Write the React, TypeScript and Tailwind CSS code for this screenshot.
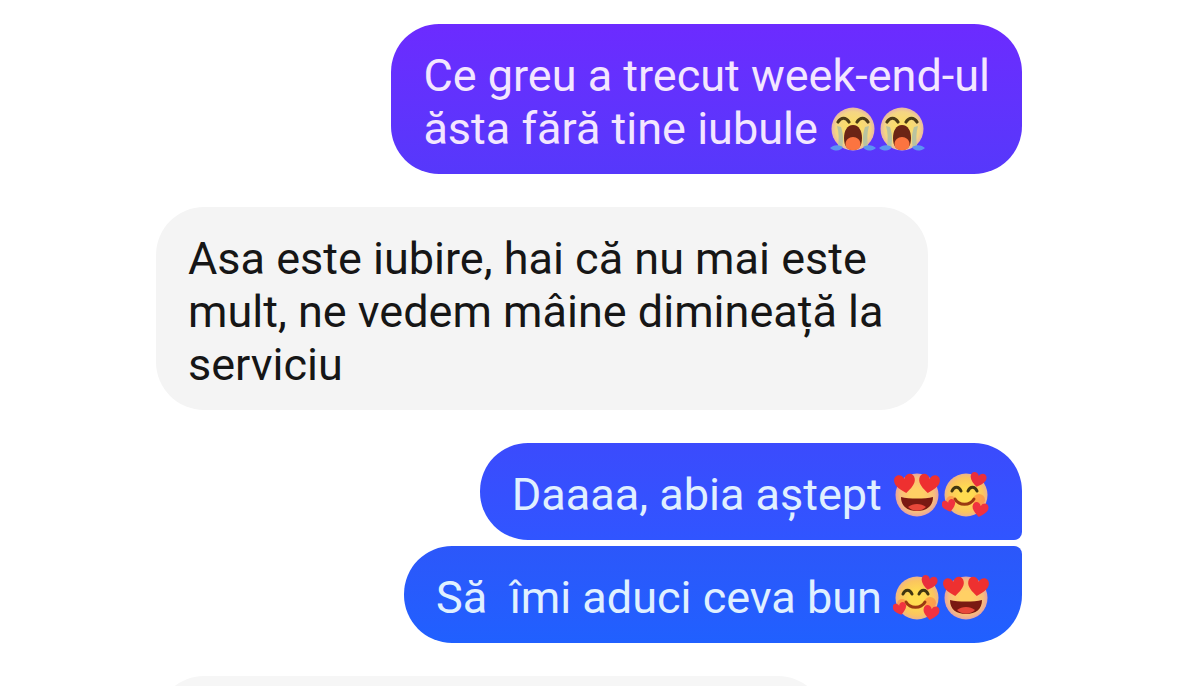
import { clsx } from "clsx";

type EmojiName = "cry" | "heartEyes" | "loved";

type Message = {
  text: string;
  emojis?: EmojiName[];
  className: string;
};

const groups: { mine: boolean; messages: Message[] }[] = [
  {
    mine: true,
    messages: [
      {
        text: "Ce greu a trecut week-end-ul\năsta fără tine iubule ",
        emojis: ["cry", "cry"],
        className: "rounded-[48px] bg-linear-to-b from-[#6c2bff] to-[#5638fb] text-[#f3e6ff]",
      },
    ],
  },
  {
    mine: false,
    messages: [
      {
        text: "Asa este iubire, hai că nu mai este mult, ne vedem mâine dimineață la serviciu",
        className: "rounded-[48px] bg-[#f4f4f4] text-[#161616]",
      },
    ],
  },
  {
    mine: true,
    messages: [
      {
        text: "Daaaa, abia aștept ",
        emojis: ["heartEyes", "loved"],
        className:
          "rounded-[48px] rounded-br-lg bg-linear-to-b from-[#3b4bfd] to-[#3055ff] text-[#e0f0ff]",
      },
      {
        text: "Să  îmi aduci ceva bun ",
        emojis: ["loved", "heartEyes"],
        className:
          "rounded-[48px] rounded-tr-lg bg-linear-to-b from-[#2c57fa] to-[#2060ff] text-[#e0f0ff]",
      },
    ],
  },
];

const labels: Record<EmojiName, string> = {
  cry: "loudly crying face",
  heartEyes: "smiling face with heart eyes",
  loved: "smiling face with hearts",
};

const HEART = "M0 7C-4 4-8 1-8-3C-8-8-2-9 0-4C2-9 8-8 8-3C8 1 4 4 0 7Z";

function CryFace() {
  return (
    <>
      <circle cx="24" cy="24" r="21.5" fill="url(#pale)" />
      <path d="M8 21c2 7 2 13 1 20l4 1c2-7 1-14-1-20zM40 21c-2 7-2 13-1 20l-4 1c-2-7-1-14 1-20z" fill="#b9c3a0" />
      <path d="M1 43c3-3 8-4 13-1c-2 4-8 5-13 1M47 43c-3-3-8-4-13-1c2 4 8 5 13 1" fill="#5d93f2" />
      <path d="M9 17c3-5 8-5 11 0M28 17c3-5 8-5 11 0" stroke="#4c3a16" strokeWidth="3.2" strokeLinecap="round" fill="none" />
      <path d="M24 20c6 0 9 6 9 13c0 8-3 12-9 12s-9-4-9-12c0-7 3-13 9-13z" fill="#6b2415" />
      <path d="M24 32c4 0 7.500 3 7.500 7c0 4-3 6-7.500 6s-7.500-2-7.500-6c0-4 3.500-7 7.500-7z" fill="#fb7440" />
    </>
  );
}

function HeartEyesFace() {
  return (
    <>
      <circle cx="24" cy="24" r="21.5" fill="url(#peach)" />
      <path d="M8 26c8 2 24 2 32 0c0 9-6 14-16 14s-16-5-16-14z" fill="#7a1a12" />
      <path d="M15 36c5-4 13-4 18 0c-5 5-13 5-18 0z" fill="#e8483a" />
      <path d={HEART} transform="translate(12 13) rotate(-8) scale(1.3)" fill="#ee3030" />
      <path d={HEART} transform="translate(36 13) rotate(8) scale(1.3)" fill="#ee3030" />
    </>
  );
}

function LovedFace() {
  return (
    <>
      <circle cx="24" cy="24" r="21.5" fill="url(#gold)" />
      <circle cx="9" cy="30" r="5" fill="#ff8540" opacity="0.6" />
      <circle cx="37" cy="29" r="6" fill="#ff7838" opacity="0.5" />
      <path d="M10 20c2-5 7-5 9 0M26 20c2-5 7-5 9 0" stroke="#403610" strokeWidth="3" strokeLinecap="round" fill="none" />
      <path d="M13 28c4 7 15 7 19 0" stroke="#9b3a12" strokeWidth="3" strokeLinecap="round" fill="none" />
      <path d={HEART} transform="translate(36 9) rotate(12)" fill="#e92f3c" />
      <path d={HEART} transform="translate(7 35) rotate(-15) scale(0.85)" fill="#f0323f" />
      <path d={HEART} transform="translate(38 39) rotate(10)" fill="#f0323f" />
    </>
  );
}

function Emoji({ name }: { name: EmojiName }) {
  return (
    <svg
      role="img"
      aria-label={labels[name]}
      viewBox="0 0 48 48"
      className="inline-block size-12 align-middle"
    >
      {name === "cry" && <CryFace />}
      {name === "heartEyes" && <HeartEyesFace />}
      {name === "loved" && <LovedFace />}
    </svg>
  );
}

// Shared face fills
function EmojiGradients() {
  return (
    <svg className="absolute size-0" aria-hidden="true">
      <defs>
        <radialGradient id="pale">
          <stop offset="0.3" stopColor="#fbdd68" />
          <stop offset="0.8" stopColor="#f4d584" />
          <stop offset="1" stopColor="#e8b6a5" />
        </radialGradient>
        <radialGradient id="peach">
          <stop offset="0.3" stopColor="#ffd065" />
          <stop offset="0.8" stopColor="#f8bd7c" />
          <stop offset="1" stopColor="#e7a3a0" />
        </radialGradient>
        <radialGradient id="gold">
          <stop offset="0.3" stopColor="#ffdc50" />
          <stop offset="0.8" stopColor="#fbc55f" />
          <stop offset="1" stopColor="#edb48c" />
        </radialGradient>
      </defs>
    </svg>
  );
}

function Bubble({ message }: { message: Message }) {
  return (
    <p
      className={clsx(
        "w-fit max-w-[772px] whitespace-pre-wrap px-8 pt-[25px] pb-[19px] text-[45px] leading-[53px]",
        message.className
      )}
    >
      {message.text}
      {message.emojis && (
        <span className="inline-flex h-[53px] items-center gap-px align-bottom">
          {message.emojis.map((name, i) => (
            <Emoji key={i} name={name} />
          ))}
        </span>
      )}
    </p>
  );
}

export default function App() {
  return (
    <main className="h-screen overflow-hidden bg-white pt-6 pr-[178px] pl-[156px] font-['Roboto',sans-serif]">
      <EmojiGradients />
      <div className="flex flex-col gap-[33px]">
        {groups.map((group, i) => (
          <section
            key={i}
            className={clsx("flex flex-col gap-[6px]", group.mine ? "items-end" : "items-start")}
          >
            {group.messages.map((message) => (
              <Bubble key={message.text} message={message} />
            ))}
          </section>
        ))}
        <div className="h-24 w-full max-w-[670px] rounded-[48px] bg-[#f6f6f6]" />
      </div>
    </main>
  );
}
